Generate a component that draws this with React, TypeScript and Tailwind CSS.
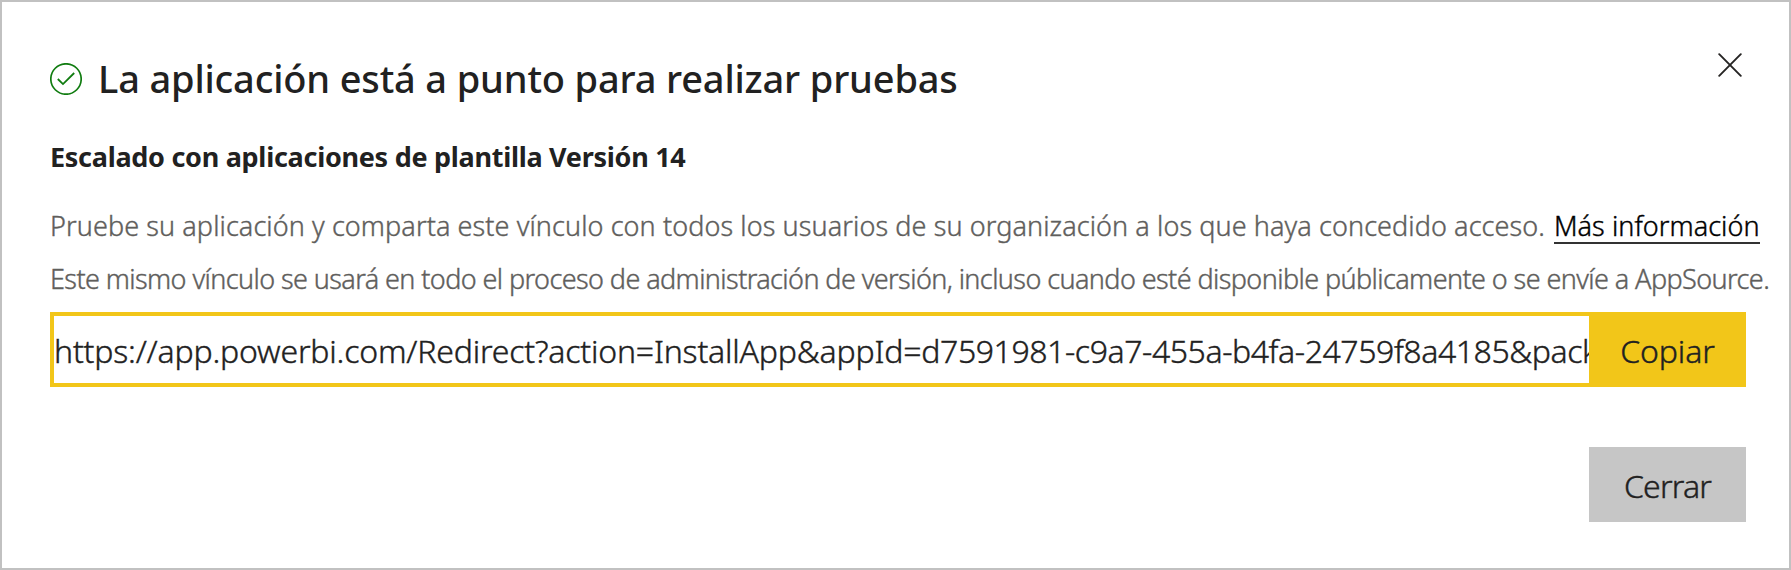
import React from "react";

function CheckCircle() {
  return (
    <svg className="mt-[13px] h-8 w-8 shrink-0" viewBox="0 0 32 32" fill="none" stroke="#107c10">
      <circle cx="16" cy="16" r="15.2" strokeWidth="1.7" />
      <path d="M7.8 16 L13 21.1 L24.2 10" strokeWidth="1.8" />
    </svg>
  );
}

function CloseIcon() {
  return (
    <svg className="h-6 w-6" viewBox="0 0 24 24" fill="none" stroke="#252423" strokeWidth="1.9" strokeLinecap="round">
      <path d="M1.2 1.2 L22.8 22.8 M22.8 1.2 L1.2 22.8" />
    </svg>
  );
}

export default function App() {
  return (
    <main className="flex h-[570px] w-[1791px] flex-col overflow-hidden whitespace-nowrap border-2 border-[#c1c1c1] bg-white pl-12 font-['Noto_Sans',sans-serif] text-[#212121]">
      <header className="mt-[48px] flex h-[58px] justify-between pr-[47px]">
        <div className="flex">
          <CheckCircle />
          <h1 className="ml-4 mt-0.5 text-[38px] font-medium leading-[52px] tracking-[-0.16px]">
            La aplicación está a punto para realizar pruebas
          </h1>
        </div>
        <button className="mt-[3px] h-6 w-6" aria-label="Cerrar diálogo">
          <CloseIcon />
        </button>
      </header>

      <h2 className="mt-[31px] text-[27px] font-bold leading-9 tracking-[-0.28px]">
        Escalado con aplicaciones de plantilla Versión 14
      </h2>

      <div className="mt-[33px] flex text-[27px] font-light leading-9 text-[#605e5c] [-webkit-text-stroke:0.4px]">
        <p className="w-[1504px] tracking-[0.09px]">
          Pruebe su aplicación y comparta este vínculo con todos los usuarios de su organización a los que haya concedido acceso.
        </p>
        <a className="h-[36px] w-[206px] border-b-2 border-[#333333] tracking-[0.05px] text-black">Más información</a>
      </div>
      <p className="mt-[17px] text-[27px] font-light leading-9 tracking-[-0.59px] text-[#605e5c] [-webkit-text-stroke:0.4px]">
        Este mismo vínculo se usará en todo el proceso de administración de versión, incluso cuando esté disponible públicamente o se envíe a AppSource.
      </p>

      <div className="mt-[15px] flex h-[75px] w-[1696px] text-[32px] font-light [-webkit-text-stroke:0.4px]">
        <div className="min-w-0 flex-1 overflow-hidden border-4 border-r-0 border-[#f2c619] leading-[69px]">
          <span className="tracking-[-0.19px]">https://app.powerbi.com/Redirect?action=InstallApp&amp;appId=</span>
          <span className="tracking-[-0.43px]">d7591981-c9a7-455a-b4fa-24759f8a4185&amp;pack</span>
        </div>
        <button className="w-[157px] bg-[#f2c619] pt-0.5 tracking-[-0.1px]">Copiar</button>
      </div>

      <button className="ml-[1539px] mt-[60px] h-[75px] w-[157px] bg-[#c6c6c6] pt-0.5 text-[32px] font-light tracking-[-0.8px] [-webkit-text-stroke:0.4px]">
        Cerrar
      </button>
    </main>
  );
}
